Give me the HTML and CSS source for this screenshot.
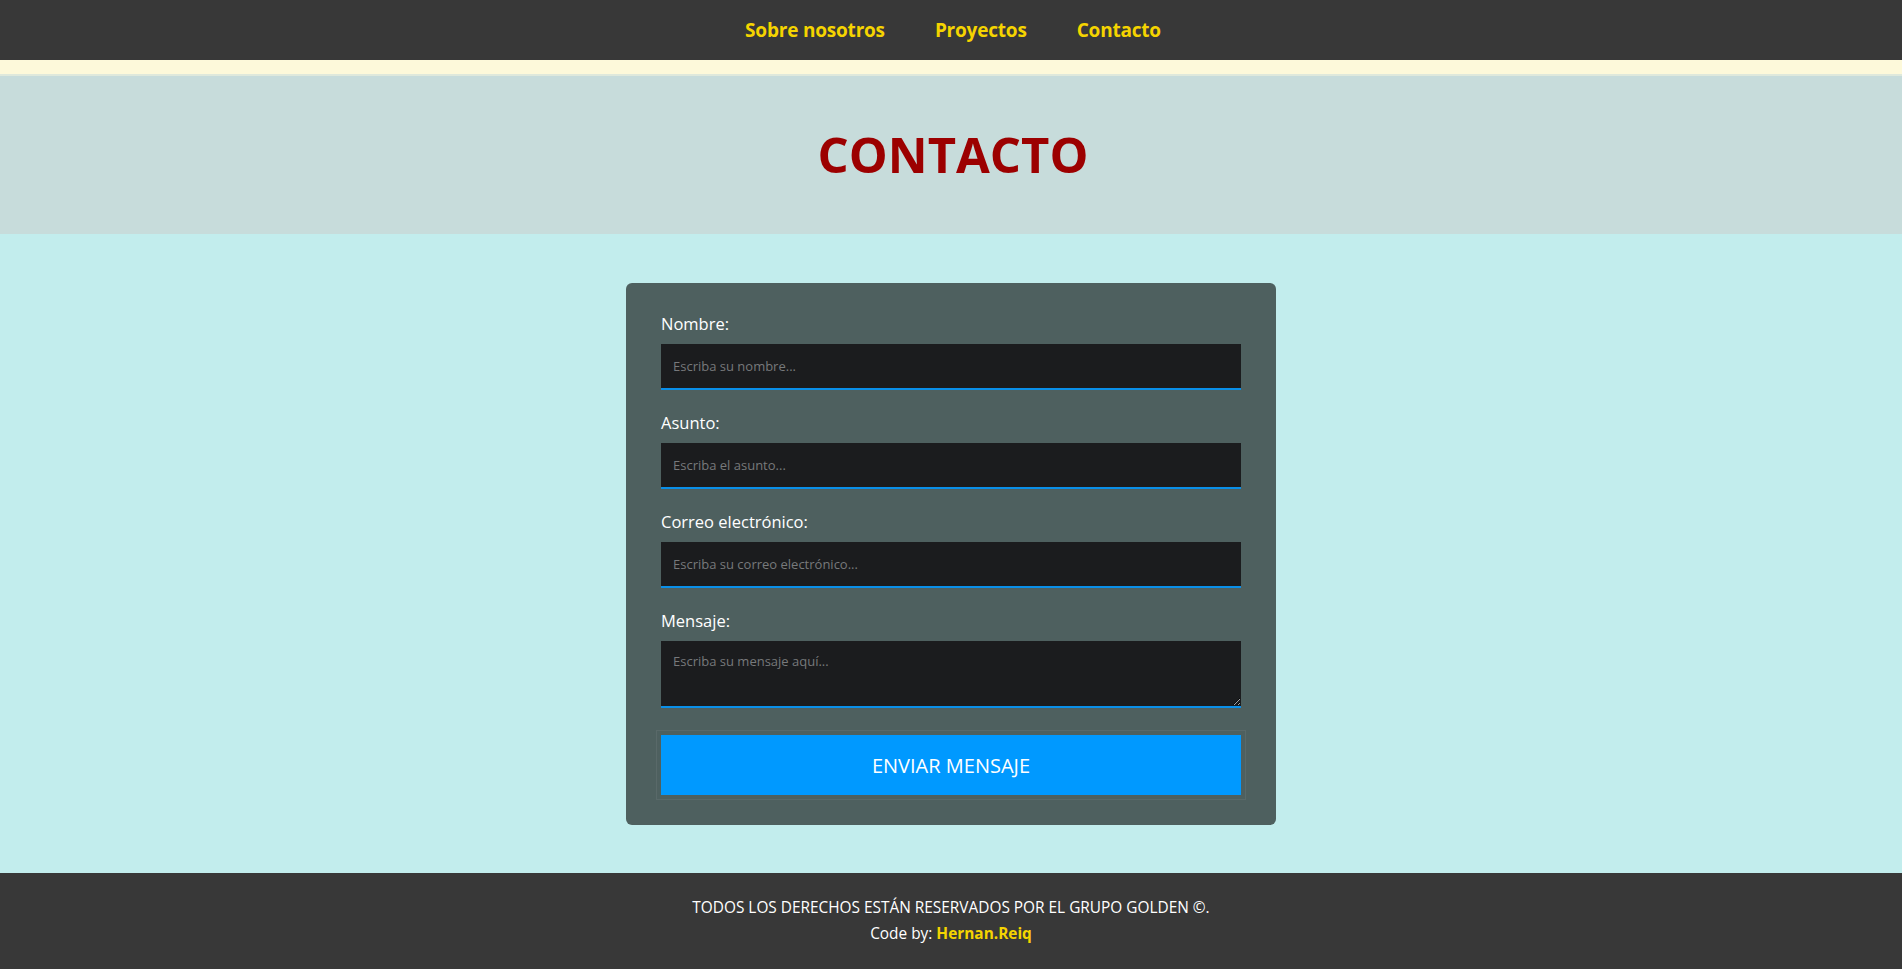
FILE: index.html
```html
<!DOCTYPE html>
<html lang="es">
<head>
<meta charset="utf-8">
<title>Contacto</title>
<link rel="stylesheet" href="styles.css">
</head>
<body>
<nav class="nav">
  <a class="nav-link" href="#">Sobre nosotros</a>
  <a class="nav-link" href="#">Proyectos</a>
  <a class="nav-link" href="#">Contacto</a>
</nav>
<div class="strip"></div>
<header class="hero">
  <h1 class="hero-title">CONTACTO</h1>
</header>
<main class="main">
  <form class="card">
    <label class="label" for="n">Nombre:</label>
    <input class="field" id="n" type="text" placeholder="Escriba su nombre...">
    <label class="label" for="a">Asunto:</label>
    <input class="field" id="a" type="text" placeholder="Escriba el asunto...">
    <label class="label" for="c">Correo electrónico:</label>
    <input class="field" id="c" type="email" placeholder="Escriba su correo electrónico...">
    <label class="label" for="m">Mensaje:</label>
    <textarea class="field area" id="m" placeholder="Escriba su mensaje aquí..."></textarea>
    <button class="send" type="button">ENVIAR MENSAJE</button>
  </form>
</main>
<footer class="footer">
  <p class="foot-line">TODOS LOS DERECHOS ESTÁN RESERVADOS POR EL GRUPO GOLDEN ©.</p>
  <p class="foot-line">Code by: <span class="author">Hernan.Reiq</span></p>
</footer>
</body>
</html>
```
FILE: styles.css
```css
* { box-sizing: border-box; }
html, body { margin: 0; padding: 0; }
body {
  font-family: "Open Sans", "Noto Sans", sans-serif;
  background: #c2eded;
}
.nav {
  height: 60px;
  background: #383838;
  display: flex;
  justify-content: center;
  align-items: center;
  gap: 50px;
  padding-left: 4px;
}
.nav-link {
  color: #f5d400;
  font-weight: 700;
  font-size: 19px;
  text-decoration: none;
  letter-spacing: -0.2px;
}
.strip {
  height: 16px;
  background: #fdf9da;
  border-bottom: 2px solid #dfe9dc;
}
.hero {
  height: 158px;
  background: #c7dcdb;
  display: flex;
  justify-content: center;
  align-items: center;
}
.hero-title {
  margin: 0 0 2px 4px;
  color: #9c0000;
  font-size: 49px;
  font-weight: 700;
  line-height: 1;
}
.main {
  display: flex;
  justify-content: center;
  padding: 49px 0 48px;
}
.card {
  width: 650px;
  background: #4e605f;
  border-radius: 6px;
  padding: 30px 35px;
  display: flex;
  flex-direction: column;
}
.label {
  color: #ffffff;
  font-size: 16.5px;
  line-height: 22px;
  margin-bottom: 9px;
}
.field {
  height: 46px;
  background: #1b1c1e;
  border: none;
  border-bottom: 2px solid #0a8fe8;
  padding: 0 12px;
  color: #ddd;
  font-family: "Open Sans", "Noto Sans", sans-serif;
  font-size: 13px;
  margin-bottom: 22px;
  outline: none;
}
.field::placeholder { color: #77797b; }
.area {
  height: 67px;
  padding-top: 11px;
  resize: vertical;
  margin-bottom: 27px;
}
.send {
  height: 60px;
  background: #0099ff;
  color: #ffffff;
  border: none;
  outline: 1px solid #596969;
  outline-offset: 4px;
  font-family: "Open Sans", "Noto Sans", sans-serif;
  font-size: 20px;
  cursor: pointer;
}
.footer {
  height: 96px;
  background: #383838;
  display: flex;
  flex-direction: column;
  justify-content: center;
  align-items: center;
  gap: 4px;
}
.foot-line {
  margin: 0;
  color: #ffffff;
  font-size: 15.4px;
  line-height: 22px;
}
.author {
  color: #f5d400;
  font-weight: 700;
}
```
